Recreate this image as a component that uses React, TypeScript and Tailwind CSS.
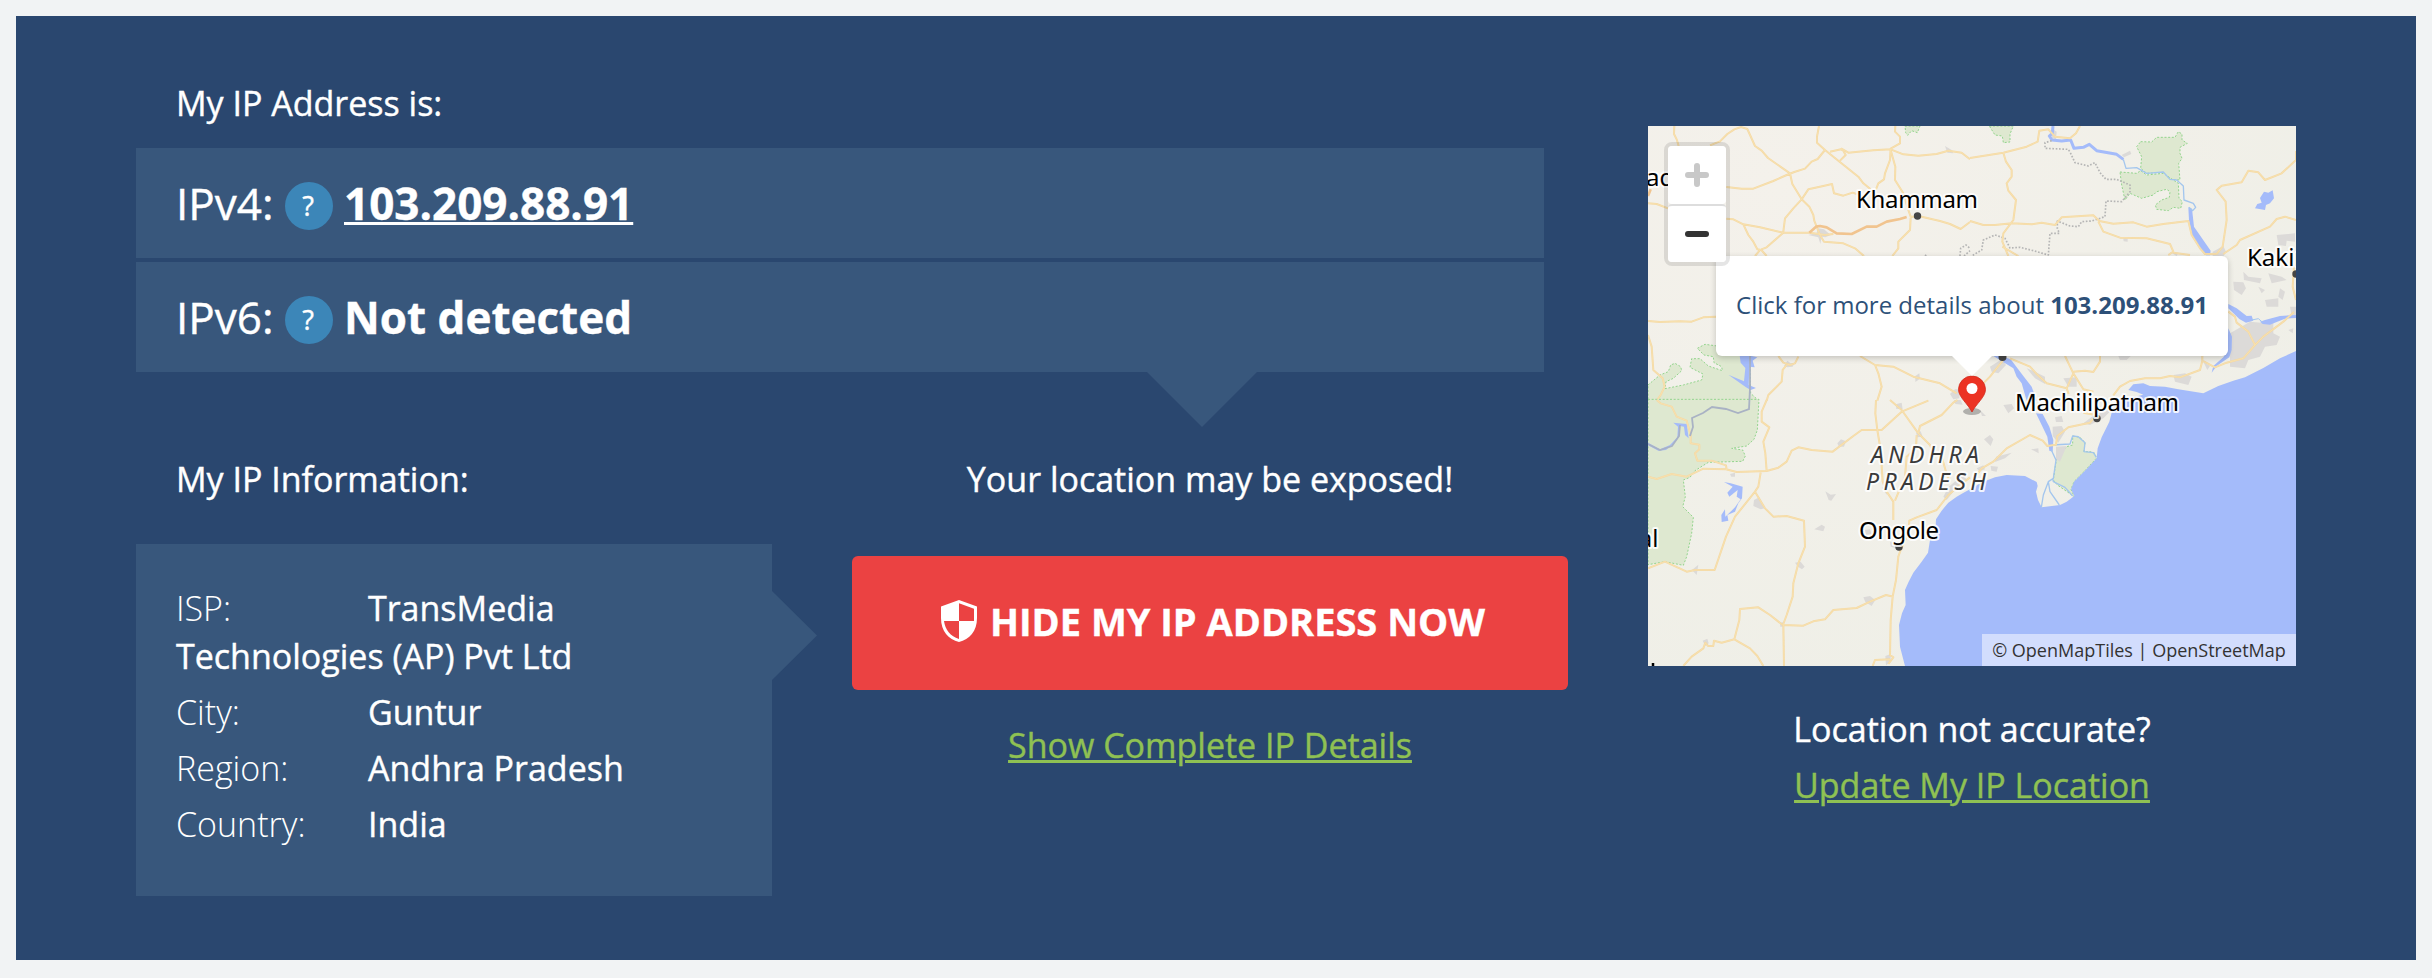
import React from "react";

const ROAD = "#f4d9a4";
const WATER = "#a4bbfa";
const PARK = "#dee8d0";
const TOWN = "#dcdad8";

type Tile = {
  x: number;
  y: number;
  water: string[];
  parks: string[];
  towns: string;
  rivers: [string, number][];
  borders: string;
  roads: string;
  highways?: string;
};

const tiles: Tile[] = [
  {
    x: -8,
    y: -6,
    water: [
      "M298 700 L352 712 L338 722 L344 742 L328 740 L326 795 L348 804 L332 810 L318 802 L265 764 L312 784 L316 744 L302 728Z",
    ],
    parks: [
      "M24 795 L60 765 L85 755 L92 735 L105 730 L122 740 L125 752 L100 775 L78 785 L75 806 L130 795 L185 780 L189 762 L150 742 L155 716 L180 716 L205 738 L247 752 L245 740 L222 728 L220 710 L192 705 L172 685 L195 673 L232 678 L250 700 L330 700 L332 820 L356 842 L24 842Z",
      "M795 18 H840 L832 38 L815 32 L803 46 L797 38Z",
    ],
    towns:
      "M505 345 L530 338 L535 325 L552 328 L572 345 L556 352 L545 350 L541 372 L535 352Z M915 78 L935 90 L940 100 L922 98Z M432 738 L442 722 L452 730 L464 728 L458 740 L442 742Z M826 768 L838 760 L840 776 L826 786Z M930 822 L945 808 L958 808 L958 835 L940 838Z",
    rivers: [],
    borders: "M855 408 L862 402 M960 408 L962 385 L978 375 L990 385 M972 408 L990 392",
    roads:
      "M103 18 L102 42 L110 58 L116 78 M210 76 L240 64 L262 42 L283 28 L303 21 L322 27 L345 78 L365 92 L384 114 L450 160 L457 192 L485 238 L508 260 L520 285 L523 303 L540 345 L552 365 L610 370 L645 385 L672 408 M259 201 L305 206 L340 206 L400 183 L440 165 L463 156 L495 146 L515 125 L533 117 L555 90 L531 68 V50 L537 18 M555 90 L595 122 L655 170 L670 190 L692 208 M600 122 L617 105 L610 92 L603 88 L570 95 M603 85 L625 98 L700 91 L752 88 L790 103 L835 107 L890 102 L925 92 L965 98 L990 118 M766 18 L765 35 L780 50 V70 L752 86 L750 120 L735 160 L732 178 L715 190 L708 208 M752 90 L766 140 L765 180 L790 220 L805 270 L812 290 M485 238 L505 208 L550 198 L576 192 L582 220 L610 227 L638 218 L672 230 M485 238 L460 265 L435 295 L430 335 M259 296 L280 298 L310 313 L360 322 L430 338 L510 338 L555 345 L580 342 M310 313 L325 345 L340 365 L352 388 L364 390 L380 408 M362 388 L345 408 M364 388 L380 382 L430 338 M812 290 L845 290 L900 303 L930 312 L962 327 L990 306 M812 293 L810 330 L775 365 L775 385 L757 408 M24 250 L50 252 L84 265 M24 603 L60 606 L120 604 L155 605 L190 592 L228 590 M24 645 L35 680 L40 750 L68 775 L74 800 L62 825 L50 842 M415 708 L430 728 L450 735 L465 730 L475 710 M440 735 L428 750 L425 785 L385 825 L380 842 M660 708 L705 735 L760 740 L820 770 L900 790 L950 820 M705 735 L715 760 L725 800 L712 842",
    highways:
      "M508 338 L528 320 L540 318 L560 322 L590 340 L635 342 L680 320 L710 320 L740 305 L780 297 L800 291 M24 228 L32 208",
  },
  {
    x: 322,
    y: -6,
    water: [
      "M978 693 L930 715 L880 744 L825 772 L790 782 L745 798 L700 820 L625 808 L585 800 L540 798 L520 790 L490 793 L475 810 L500 816 L520 824 L445 842 H978Z",
      "M655 262 L666 266 L672 320 L722 392 L720 406 L708 406 L668 352 L657 300Z",
      "M855 265 L862 252 L875 248 L870 234 L882 215 L895 218 L908 211 L912 235 L900 250 L888 255 L885 270Z",
      "M70 708 H92 L122 718 L160 768 L185 800 L200 842 H170 L155 790 L140 770 L130 745Z",
      "M775 552 L800 565 L830 588 L845 587 L850 602 L828 608 L808 597 L775 565Z M870 605 L885 600 L930 588 L978 585 V594 L945 596 L920 606 L900 614 L878 612Z",
      "M775 625 L786 650 L785 690 L778 712 L758 725 L740 738 L725 758 L730 738 L760 712 L772 690Z",
    ],
    parks: [
      "M512 65 L545 66 L560 52 L615 52 L625 35 L636 42 L636 60 L652 70 L630 82 L630 100 L636 115 L626 130 L630 180 L600 178 L580 157 L530 160 L512 145 L515 110 L500 80Z",
      "M450 156 L500 160 L512 152 L530 165 L580 160 L625 190 L627 235 L637 245 L632 265 L610 262 L595 272 L560 268 L556 255 L575 240 L598 232 L600 215 L590 208 L560 215 L550 225 L515 235 L480 220 L465 240 L455 195Z",
      "M58 18 H130 L120 42 L120 66 L100 68 L97 48 L75 45Z",
    ],
    towns:
      "M920 345 L975 340 V365 L950 362 L948 378 L925 375Z M790 485 L820 487 L828 505 L815 525 L792 510Z M820 455 L835 470 L875 475 L870 490 L822 480Z M895 460 L935 470 L950 480 L905 490Z M885 540 L925 535 L925 560 L890 560Z M865 500 L885 510 L875 520Z M780 640 L840 605 L890 610 L910 600 L910 640 L930 650 L920 675 L885 680 L870 710 L835 720 L825 745 L780 740Z M610 765 L645 760 L665 770 L655 795 L615 785Z M728 395 L760 378 L768 395 L760 410 L728 410Z M455 105 L480 92 L484 102 L462 112Z M445 708 H482 L470 720 L450 720Z M170 745 L195 755 L225 770 L225 792 L195 775Z M60 740 L95 718 L108 735 L85 760 L65 755Z M960 560 L978 560 V595 L965 590Z M925 530 L930 505 L945 515 L938 540Z M955 630 L970 625 L968 640Z M280 775 L320 772 L320 800 L295 800Z M245 25 L260 35 L258 58 L245 55Z M459 352 L473 352 L473 365 L461 364Z M600 396 L625 398 L620 408Z M700 725 L720 738 L712 750Z",
    rivers: [
      ["M249 18 L247 40 L238 48 L246 60 L275 63 L302 60 L312 85 L340 82 L358 73 L380 92 L440 103 L460 118", 9],
      ["M460 118 L468 145 L500 143 L530 160 L580 156 L600 178 L620 180 L640 198 L642 240 L670 250 L677 262 L668 272 L657 262", 4],
      ["M845 600 L865 596 L878 607", 3],
    ],
    borders:
      "M245 62 L225 68 L225 85 L295 88 L302 100 L315 128 L355 138 L375 128 L390 158 L408 178 L440 178 L480 195 L480 215 L455 245 L408 243 L405 290 L365 303 L335 305 L325 320 L300 318 L262 303 L262 325 L268 340 L240 340 L235 405 L190 392 L150 382 L120 384 L105 355 L75 345 L40 360 L35 390 L5 408",
    roads:
      "M0 114 L100 98 L170 80 L203 65 L208 32 L235 28 L255 50 L300 55 L318 40 L330 18 M100 98 L108 125 L125 150 L125 170 L110 190 L115 212 L138 240 L130 300 L100 340 L97 365 L115 408 M97 380 L145 408 M0 303 L40 315 L75 315 L125 310 L185 313 L215 308 L255 315 L275 292 L370 286 L388 303 L430 311 L490 307 L530 320 L580 312 L655 303 L665 345 L690 385 L705 402 L740 402 M385 305 L400 335 L450 353 L530 355 L600 372 L610 395 L595 405 M610 398 L660 405 M740 402 L758 380 L770 300 L767 245 L740 210 L755 197 L815 187 L835 152 L865 157 L885 180 L935 160 L978 120 V93 M760 402 L800 375 L810 360 L900 320 L920 297 L945 290 L978 300 M775 575 L795 590 L800 608 L835 635 L855 675 L880 650 L940 605 L972 576 M855 675 L820 715 L770 728 L735 742 L697 722 L697 708 M430 826 L450 800 L480 783 L525 775 L570 775 L600 768 L630 772 L690 750 L697 722 M100 720 L60 770 L30 800 M120 715 L180 740 L200 762 L230 790 L290 805 L310 760 L285 708 M310 755 L345 752 L370 756 L390 725 L390 708 M310 760 L340 808 L370 815 M290 805 L296 822 M972 440 L968 500 L978 540",
  },
  {
    x: -8,
    y: 274,
    water: [
      "M990 268 L968 280 L950 290 L925 308 L905 332 L888 358 L886 400 L870 420 L864 458 L845 485 L820 518 L806 545 L795 570 L797 615 L786 640 L777 675 L780 740 L795 798 H992Z",
      "M252 246 L272 250 L308 260 L306 295 L295 310 L285 335 L262 345 L265 362 L245 366 L244 345 L255 328 L256 350 L285 322 L302 298 L290 290 L293 270 L268 290 L262 278 L278 260Z",
      "M100 68 L140 72 L146 115 L135 105 L132 80 L120 78 L118 110 L100 132 L78 150 L55 152 L24 136 V128 L60 148 L90 135 L112 112 L114 80Z",
    ],
    parks: [
      "M24 -2 H357 L352 90 L342 118 L320 138 L275 145 L308 150 L316 168 L308 184 L205 187 L165 212 L150 232 L130 240 L136 290 L128 320 L160 352 L155 400 L140 470 L130 496 L75 485 L24 494Z",
    ],
    towns:
      "M342 300 L358 292 L375 325 L362 328 L340 318Z M556 274 L572 284 L588 282 L574 302 L566 300Z M523 388 L545 374 L555 380 L550 394Z M592 130 L603 118 L618 124 L612 140 L597 140Z M465 488 L482 485 L494 500 L486 508 L474 500Z M670 592 L690 588 L706 600 L695 618 L676 606Z M156 510 L175 494 L170 525Z M188 722 L202 716 L206 730 L196 738Z M770 12 L785 8 L788 28 L768 26Z M910 290 L925 262 L950 240 L960 225 L975 215 L978 240 L940 275 L920 300Z M736 768 L752 762 L752 785 L738 796Z M750 425 L790 430 L788 450 L752 440Z M675 390 L690 388 L695 402 L678 404Z M725 262 L745 268 L740 284Z M270 222 L285 218 L285 230 L274 230Z M828 98 L842 94 L848 110 L832 112Z M942 0 L962 0 L968 14 L946 12Z M420 668 L432 666 L432 680 L421 680Z",
    rivers: [],
    borders: "",
    roads:
      "M50 0 L62 10 L95 20 L110 50 L140 62 L152 105 L152 130 L178 134 L178 148 L165 160 L172 182 L215 182 L258 196 L260 210 M24 230 L50 237 L95 222 L140 230 L190 206 L258 208 L290 216 L380 213 L415 203 L440 185 L455 152 L475 142 L515 150 L578 155 L640 108 L665 90 L725 90 L785 35 L865 2 M380 213 L376 160 L370 125 L388 82 L365 65 L365 35 L380 0 M362 218 L355 260 L345 275 L285 350 L258 410 L224 510 L165 510 L140 515 L75 485 L24 505 M345 275 L375 325 L400 350 L440 348 L492 362 L495 440 L475 490 L460 550 L458 590 L440 645 L430 672 L432 798 M428 675 L390 645 L355 622 L300 627 L298 660 L283 718 L330 745 L352 768 L370 798 M283 718 L245 728 L222 722 L220 738 L204 738 L196 728 L190 745 L155 770 L130 798 M430 675 L490 677 L520 664 L555 658 L580 630 L650 624 L690 605 L738 585 L760 590 M708 0 L706 40 L712 90 L722 150 L728 245 L740 275 L760 305 V360 M750 0 L785 30 L835 100 L870 135 L882 165 L905 170 L918 215 L925 235 M835 100 L840 78 L905 45 L940 8 L952 0 M830 105 L828 145 L800 170 L795 230 L765 302 M990 232 L960 255 L925 285 L890 330 L830 352 L808 362 L805 400 L782 450 L775 470 L768 540 L758 590 L752 660 L750 765 L760 772 L745 792 M750 778 L705 780 L698 798",
  },
  {
    x: 322,
    y: 274,
    water: [
      "M978 -2 H440 L425 38 L418 65 L395 112 L383 145 L380 175 L345 212 L312 245 L303 268 L313 288 L290 305 L270 315 L215 322 L204 300 L198 275 L203 258 L200 246 L165 228 L110 225 L75 232 L40 245 L-2 268 V798 H978Z",
      "M198 40 L218 42 L238 80 L250 120 L248 155 L238 152 L232 110Z",
    ],
    parks: [
      "M308 108 L330 112 L345 128 L342 155 L360 155 L375 160 L379 175 L345 212 L312 245 L303 268 L313 290 L262 255 L250 240 L260 170 L290 140 L308 135Z",
    ],
    towns:
      "M100 15 L125 12 L132 25 L115 40Z M248 80 L275 78 L285 95 L265 128 L248 108Z M42 118 L60 105 L70 118 L62 138Z M183 148 L205 145 L206 160Z M258 140 L290 138 L270 185 L258 178Z M78 170 L125 158 L105 175 L75 186Z M20 205 L40 196 L45 208 L28 214Z M62 198 L84 200 L80 215 L64 212Z M340 70 L380 40 L430 25 L400 55 L360 75Z M30 30 L48 48 L36 48Z M255 52 L275 48 L280 66 L258 66Z",
    rivers: [
      ["M246 135 L300 132 L308 108 L325 110 L345 128 L342 155 L370 158 L379 172", 4],
      ["M244 150 L258 180 L250 235 L235 245 L220 285 L214 322 M248 235 L250 245 L285 262 L308 288 M235 245 L240 275 L268 315", 4],
    ],
    borders: "",
    roads:
      "M20 225 L35 205 L70 185 L110 145 L180 105 L218 122 L232 138 L258 134 L262 108 L295 82 L360 68 L378 45 L340 38",
  },
];

function MapCanvas() {
  return (
    <svg className="absolute inset-0" width="648" height="540" viewBox="0 0 648 540">
      <defs>
        <radialGradient id="shade" cx="0.2" cy="0.1" r="1">
          <stop offset="0" stopColor="#f4f1eb" />
          <stop offset="1" stopColor="#efefe7" />
        </radialGradient>
      </defs>
      <rect width="648" height="540" fill="url(#shade)" />
      {tiles.map((t) => (
        <g key={`${t.x},${t.y}`} transform={`translate(${t.x} ${t.y}) scale(0.33333)`} fill="none" strokeLinejoin="round">
          {t.parks.map((d) => (
            <path key={d} d={d} fill={PARK} stroke="#93d48d" strokeWidth="3" strokeDasharray="6 5" />
          ))}
          <path d={t.towns} fill={TOWN} />
          {t.water.map((d) => (
            <path key={d} d={d} fill={WATER} />
          ))}
          {t.rivers.map(([d, w]) => (
            <path key={d} d={d} stroke={w > 5 ? WATER : "#a3c6ee"} strokeWidth={w} />
          ))}
          <path d={t.borders} stroke="#b5b5b5" strokeWidth="5" strokeDasharray="5 5" />
          <path d={t.roads} stroke={ROAD} strokeWidth="6" />
          <path d={t.roads} stroke="#f9e4b4" strokeWidth="2" />
          {t.highways && <path d={t.highways} stroke="#f1c48f" strokeWidth="8" />}
        </g>
      ))}
      <path
        d="M102 228 L102 262 L101 283 L90 287 L78 283 L64 281 L55 287 L44 292 L45 301 L42 310 M0 318 L12 324 L24 320 L31 310 L32 299"
        fill="none"
        stroke="#a9b2c4"
        strokeWidth="1.8"
      />

      <g fill="#454545">
        <circle cx="269.5" cy="90" r="3.7" />
        <circle cx="449" cy="292.5" r="3.7" />
        <circle cx="251" cy="421" r="3.7" />
        <circle cx="648" cy="148" r="3.7" />
        <circle cx="354.5" cy="231" r="4" />
      </g>
      <g
        className="font-['Noto_Sans',sans-serif]"
        fontSize="24"
        fill="#000"
        stroke="#fff"
        strokeOpacity="0.85"
        strokeWidth="4"
        strokeLinejoin="round"
        paintOrder="stroke"
      >
        <text x="208" y="82" textLength="122">Khammam</text>
        <text x="367" y="284.5" textLength="164">Machilipatnam</text>
        <text x="211" y="412.5" textLength="80">Ongole</text>
        <text x="599" y="140">Kakinada</text>
        <text x="-2" y="59.5">ad</text>
        <text x="10.5" y="420.5" textAnchor="end">al</text>
        <g fontStyle="italic" fill="#3a3a3a" fontSize="23">
          <text x="223" y="336.5" textLength="108">ANDHRA</text>
          <text x="218" y="363.5" textLength="120">PRADESH</text>
        </g>
      </g>
      <path d="M5 537 V540" stroke="#000" strokeWidth="2.5" />
    </svg>
  );
}

function LocationMap() {
  return (
    <div className="relative h-[540px] w-[648px] overflow-hidden [-webkit-text-stroke:0]">
      <MapCanvas />

      <svg className="absolute left-[307px] top-[249px]" width="36" height="42" viewBox="0 0 36 42">
        <ellipse cx="17" cy="36.5" rx="9" ry="3.5" fill="#6f6f6f" opacity="0.5" />
        <path d="M17 37 C13 29 3.5 22 3.5 14.5 A13.5 13.5 0 0 1 30.5 14.5 C30.5 22 21 29 17 37Z" fill="#ec3323" stroke="#d12a1c" strokeWidth="0.8" />
        <circle cx="17" cy="13.5" r="5.5" fill="#fff" />
      </svg>

      <div className="absolute left-[68px] top-[130px] flex h-[100px] w-[512px] items-center justify-center whitespace-nowrap rounded-md bg-white pb-0.5 font-['Open_Sans',sans-serif] text-2xl text-[#2d5078] shadow-[0_2px_6px_rgba(0,0,0,0.2)]">
        <span>
          Click for more details about <b className="font-bold">103.209.88.91</b>
        </span>
        <span className="absolute left-[236px] top-full h-5 w-10 bg-white [clip-path:polygon(0_0,100%_0,50%_100%)]" />
      </div>

      <div className="absolute left-4 top-4 flex h-[124px] w-[66px] flex-col rounded-lg border-4 border-black/10 bg-clip-padding">
        <button className="flex h-[58px] items-center justify-center rounded bg-white">
          <svg width="24" height="24" viewBox="0 0 24 24" stroke="#c8c8c8" strokeWidth="6" strokeLinecap="round">
            <path d="M3 12 H21 M12 3 V21" />
          </svg>
        </button>
        <button className="flex h-[58px] items-center justify-center rounded border-t-2 border-[#ddd] bg-white">
          <svg width="24" height="24" viewBox="0 0 24 24" stroke="#333" strokeWidth="6" strokeLinecap="round">
            <path d="M3 12 H21" />
          </svg>
        </button>
      </div>

      <div className="absolute bottom-0 right-0 flex h-8 w-[314px] items-center justify-center whitespace-nowrap bg-white/50 font-['Open_Sans',sans-serif] text-lg text-[#333]">
        © OpenMapTiles | OpenStreetMap
      </div>
    </div>
  );
}

function AddressRow({ label, children }: { label: string; children: React.ReactNode }) {
  return (
    <div className="flex h-[110px] items-center bg-[#38577c] pl-10 text-[44px] leading-none">
      <span className="w-[109px] whitespace-nowrap">{label}</span>
      <span className="mr-[11px] mt-1.5 flex size-12 items-center justify-center rounded-full bg-[#3c86b8] pr-0.5 pb-0.5 text-[27px]">?</span>
      {children}
    </div>
  );
}

function InfoRow({ label, value }: { label: string; value: string }) {
  return (
    <li className="mb-2">
      <span className="inline-block w-48 font-light [-webkit-text-stroke:0]">{label}</span>
      <span>{value}</span>
    </li>
  );
}

function ShieldIcon() {
  return (
    <svg className="mr-[13px]" width="36" height="42" viewBox="0 0 36 42">
      <path
        fill="#fff"
        fillRule="evenodd"
        d="M18 0 L36 6.5 V18 C36 31 28.500 39.500 18 42 C7.500 39.500 0 31 0 18 V6.5Z M18 3.3 V21 H33 V8.7Z M18 21 H3 C4 29.500 9.500 36.500 18 39Z"
      />
    </svg>
  );
}

export default function App() {
  return (
    <div className="h-[978px] w-[2432px] bg-[#f1f3f4] p-4 font-['Open_Sans',sans-serif] text-[34px] leading-[48px] text-white [-webkit-text-stroke:0.4px]">
      <main className="flex h-[944px] w-[2400px] gap-20 bg-[#2a476f] pl-[120px]">
        <div className="w-[1432px] pt-[63px]">
          <h2 className="h-[69px] pl-10">My IP Address is:</h2>
          <div className="relative flex w-[1408px] flex-col gap-1">
            <AddressRow label="IPv4:">
              <a className="font-bold underline decoration-[3px]">103.209.88.91</a>
            </AddressRow>
            <AddressRow label="IPv6:">
              <span className="font-bold">Not detected</span>
            </AddressRow>
            <span className="absolute left-[1011px] top-full h-[55px] w-[110px] bg-[#38577c] [clip-path:polygon(0_0,100%_0,50%_100%)]" />
          </div>

          <div className="flex gap-20 pt-[83px]">
            <section className="w-[636px]">
              <h2 className="pl-10">My IP Information:</h2>
              <div className="relative mt-[41px] h-[352px] bg-[#38577c] px-10 pt-10">
                <ul>
                  <InfoRow label="ISP:" value="TransMedia Technologies (AP) Pvt Ltd" />
                  <InfoRow label="City:" value="Guntur" />
                  <InfoRow label="Region:" value="Andhra Pradesh" />
                  <InfoRow label="Country:" value="India" />
                </ul>
                <span className="absolute left-full top-[47px] h-[89px] w-[45px] bg-[#38577c] [clip-path:polygon(0_0,100%_50%,0_100%)]" />
              </div>
            </section>

            <section className="flex w-[716px] flex-col items-center">
              <p>Your location may be exposed!</p>
              <button className="mt-[53px] flex h-[134px] w-full items-center justify-center whitespace-nowrap rounded-md bg-[#eb4242] pb-1 pl-1.5 text-[38px] font-bold">
                <ShieldIcon />
                HIDE MY IP ADDRESS NOW
              </button>
              <a className="mt-[31px] text-[#8fc153] underline decoration-[3px]">Show Complete IP Details</a>
            </section>
          </div>
        </div>

        <aside className="flex w-[648px] flex-col items-center pt-[110px]">
          <LocationMap />
          <p className="mt-[39px]">Location not accurate?</p>
          <a className="mt-2 text-[#8fc153] underline decoration-[3px]">Update My IP Location</a>
        </aside>
      </main>
    </div>
  );
}
